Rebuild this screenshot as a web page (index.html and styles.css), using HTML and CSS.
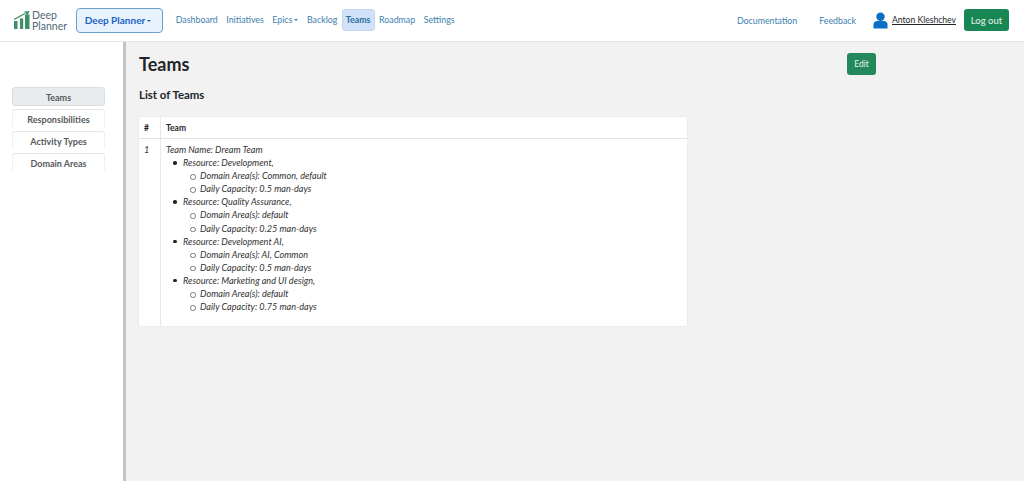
FILE: index.html
```html
<!DOCTYPE html>
<html lang="en">
<head>
<meta charset="utf-8">
<title>Teams - Deep Planner</title>
<link rel="stylesheet" href="styles.css">
</head>
<body>
<header class="topbar">
  <a class="logo" href="#">
    <svg class="logo-mark" viewBox="0 0 16 18" width="16" height="18" aria-hidden="true">
      <rect x="0" y="10" width="3.500" height="8" fill="#3f8f66"/>
      <rect x="6" y="7.500" width="3.200" height="10.500" fill="#3f8f66"/>
      <rect x="11" y="3.500" width="4.500" height="14.500" fill="#3f8f66"/>
      <path d="M0 8.500 L11 2.500" stroke="#3f8f66" stroke-width="1.300" fill="none"/>
      <path d="M10 0.500 L15.500 0 L13.500 4.500 Z" fill="#3f8f66"/>
    </svg>
    <span class="logo-text">Deep<br>Planner</span>
  </a>
  <button class="project-btn" type="button">Deep Planner<span class="caret caret-project"></span></button>
  <nav class="main-nav">
    <a href="#">Dashboard</a>
    <a href="#">Initiatives</a>
    <a href="#">Epics<span class="caret"></span></a>
    <a href="#">Backlog</a>
    <a href="#" class="active">Teams</a>
    <a href="#">Roadmap</a>
    <a href="#">Settings</a>
  </nav>
  <div class="right-nav">
    <a href="#" class="doc-link">Documentation</a>
    <a href="#" class="feedback-link">Feedback</a>
    <svg class="user-icon" viewBox="0 0 16 18" width="15" height="17" aria-hidden="true">
      <circle cx="8" cy="5" r="4.500" fill="#0b6fc4"/>
      <path d="M0.500 17.500 V13.500 Q0.500 9.500 5 9.500 H11 Q15.500 9.500 15.500 13.500 V17.500 Z" fill="#0b6fc4"/>
    </svg>
    <a href="#" class="user-link">Anton Kleshchev</a>
    <button class="logout" type="button">Log out</button>
  </div>
</header>
<div class="page">
  <aside class="sidebar">
    <a href="#" class="side-item current">Teams</a>
    <a href="#" class="side-item">Responsibilities</a>
    <a href="#" class="side-item">Activity Types</a>
    <a href="#" class="side-item">Domain Areas</a>
  </aside>
  <main class="content">
    <div class="title-row">
      <h1>Teams</h1>
      <button class="edit" type="button">Edit</button>
    </div>
    <h2>List of Teams</h2>
    <table class="teams">
      <thead>
        <tr><th class="num">#</th><th>Team</th></tr>
      </thead>
      <tbody>
        <tr>
          <td class="num">1</td>
          <td>
            Team Name: Dream Team
            <ul>
              <li>Resource: Development,
                <ul>
                  <li>Domain Area(s): Common, default</li>
                  <li>Daily Capacity: 0.5 man-days</li>
                </ul>
              </li>
              <li>Resource: Quality Assurance,
                <ul>
                  <li>Domain Area(s): default</li>
                  <li>Daily Capacity: 0.25 man-days</li>
                </ul>
              </li>
              <li>Resource: Development AI,
                <ul>
                  <li>Domain Area(s): AI, Common</li>
                  <li>Daily Capacity: 0.5 man-days</li>
                </ul>
              </li>
              <li>Resource: Marketing and UI design,
                <ul>
                  <li>Domain Area(s): default</li>
                  <li>Daily Capacity: 0.75 man-days</li>
                </ul>
              </li>
            </ul>
          </td>
        </tr>
      </tbody>
    </table>
  </main>
</div>
</body>
</html>
```
FILE: styles.css
```css
* { box-sizing: border-box; }
html, body { height: 100%; }
body {
  margin: 0;
  display: flex;
  flex-direction: column;
  height: 481px;
  overflow: hidden;
  font-family: Lato, "Open Sans", sans-serif;
  font-size: 9px;
  color: #212529;
  background: #f2f2f2;
}
a { text-decoration: none; }
button { font-family: inherit; cursor: pointer; }

.topbar {
  display: flex;
  align-items: center;
  height: 42px;
  flex: none;
  padding: 0 15px 1px 14px;
  background: #fff;
  border-bottom: 1px solid #e6e6e6;
}
.logo { display: flex; align-items: center; gap: 2px; width: 62px; }
.logo-mark { flex: none; }
.logo-text { margin-top: 1px; font-size: 10.500px; line-height: 10.500px; color: #4f6a78; }
.project-btn {
  width: 87px;
  height: 25px;
  padding: 0 3px 0 0;
  font-size: 10px;
  font-weight: 700;
  color: #1a63c7;
  background: #e8f2fc;
  border: 1px solid #6f9ec9;
  border-radius: 4px;
}
.caret {
  display: inline-block;
  margin-left: 2px;
  vertical-align: 2px;
  border-top: 2.500px solid currentColor;
  border-left: 2.500px solid transparent;
  border-right: 2.500px solid transparent;
}
.main-nav { display: flex; align-items: center; margin-left: 8.500px; }
.main-nav a {
  padding: 0 3.300px;
  height: 22px;
  line-height: 20px;
  font-size: 8.800px;
  color: #3c80ae;
  border-radius: 3px;
  border: 1px solid transparent;
}
.main-nav a.active {
  font-weight: 700;
  color: #2a6f9e;
  background: #cfe2fa;
  border-color: #c3d8f0;
}
.right-nav { display: flex; align-items: center; margin-left: auto; }
.doc-link, .feedback-link { font-size: 8.800px; color: #3c80ae; }
.feedback-link { margin-left: 22px; }
.user-icon { margin-left: 17px; flex: none; }
.user-link {
  margin-left: 4px;
  font-size: 8.600px;
  color: #212529;
  text-decoration: underline;
}
.logout {
  margin-left: 8px;
  width: 45px;
  height: 22px;
  padding: 0;
  font-size: 9.500px;
  color: #eaf4ee;
  background: #198754;
  border: 0;
  border-radius: 3px;
}

.page { display: flex; flex: 1; min-height: 0; }
.sidebar {
  width: 126px;
  flex: none;
  padding: 45px 18px 0 12px;
  background: #fff;
  border-right: 3px solid #c4c4c4;
}
.side-item {
  display: block;
  height: 19px;
  margin-bottom: 3px;
  line-height: 20px;
  text-align: center;
  font-size: 9px;
  font-weight: 700;
  color: #55595c;
  background: #fff;
  border-top: 1px solid #e6e6e6;
  border-left: 1px solid #efefef;
  border-right: 1px solid #efefef;
  border-radius: 3px;
}
.side-item.current {
  background: #e9ecef;
  border: 1px solid #dcdfe2;
}
.content { flex: 1; min-width: 0; padding: 11px 0 0 13px; }
.title-row { display: flex; align-items: flex-start; height: 34px; }
h1 { margin: 0; width: 60px; flex: none; font-size: 18px; line-height: 23px; font-weight: 700; }
.edit {
  margin-left: 648px;
  width: 29px;
  height: 22px;
  padding: 0;
  font-size: 8.500px;
  color: #eaf4ee;
  background: #23895d;
  border: 0;
  border-radius: 3px;
}
h2 { margin: 0 0 13px; font-size: 11.400px; line-height: 16px; font-weight: 700; }
.teams {
  width: 550px;
  margin-left: -1px;
  border-collapse: separate;
  border-spacing: 0;
  background: #fff;
  border: 1px solid #ececec;
  border-radius: 3px;
  font-size: 9.100px;
}
.teams th {
  height: 22px;
  padding: 0 5px;
  font-size: 8.500px;
  font-weight: 700;
  text-align: left;
  color: #212529;
  border-bottom: 1px solid #e4e4e4;
}
.teams th.num { border-right: 1px solid #e8e8e8; }
.teams .num { width: 22px; }
.teams td {
  height: 187px;
  padding: 4px 5px 0;
  vertical-align: top;
  font-style: italic;
  line-height: 13.100px;
  color: #333;
}
.teams td.num { border-right: 1px solid #e8e8e8; }
.teams ul { margin: 0; padding-left: 17px; list-style: none; }
.teams li { position: relative; }
.teams li::before {
  content: "";
  position: absolute;
  left: -10px;
  top: 5px;
  width: 3.500px;
  height: 3.500px;
  border-radius: 50%;
  background: #222;
}
.teams li li::before {
  left: -10px;
  top: 5px;
  width: 3.500px;
  height: 3.500px;
  background: transparent;
  border: 0.800px solid #777;
}
```
